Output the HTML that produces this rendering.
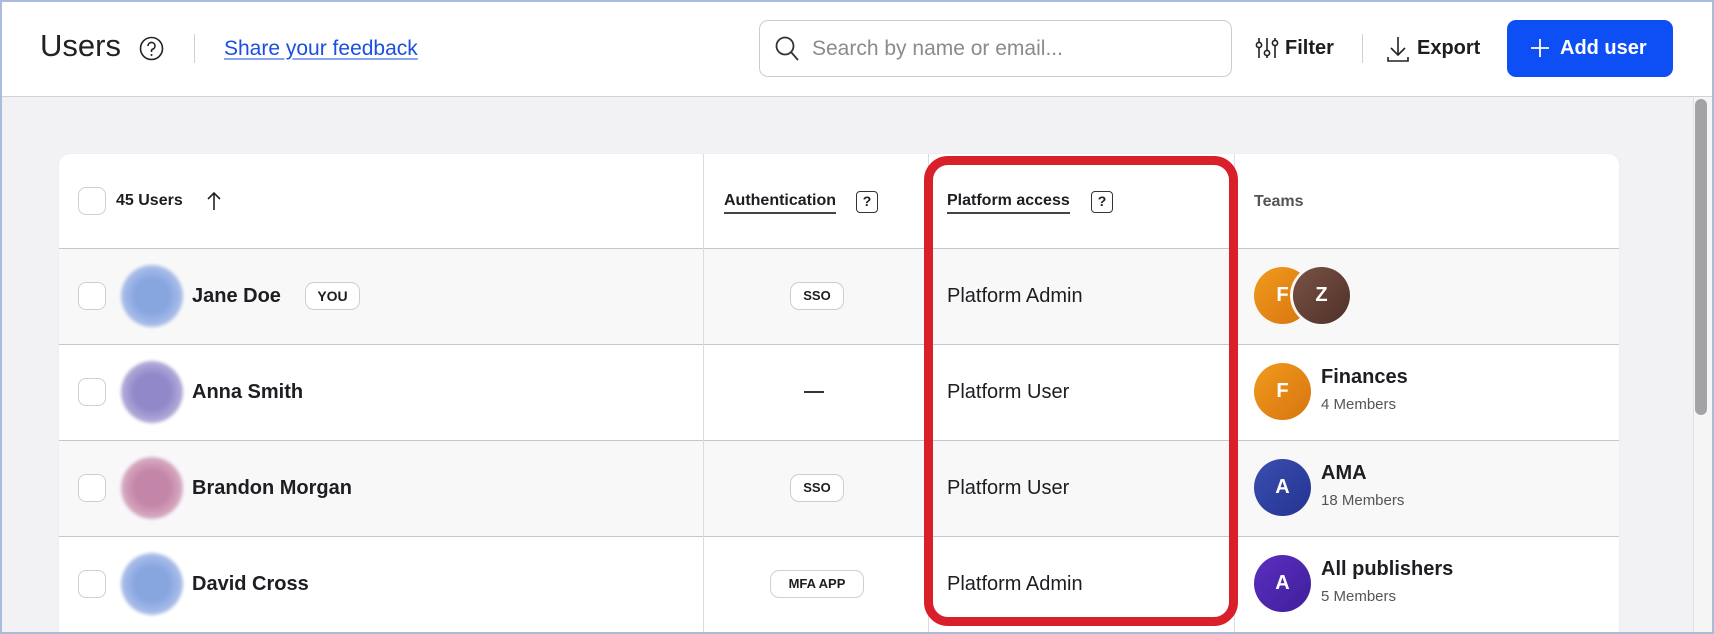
<!DOCTYPE html>
<html style="width:1714px;height:634px;overflow:hidden"><head><meta charset="utf-8"><style>
*{box-sizing:border-box;margin:0;padding:0}
body{width:1714px;height:634px;overflow:hidden;font-family:"Liberation Sans",sans-serif;color:#1d1d22;background:#f2f2f4;position:relative}
.frame{position:absolute;left:0;top:0;width:1714px;height:634px;border:2px solid #a9bcdc;pointer-events:none;z-index:50}
.hdr{position:absolute;left:0;top:0;width:1714px;height:97px;background:#fff;border-bottom:1px solid #d2d2d6}
.a{position:absolute}
.card{position:absolute;left:59px;top:154px;width:1560px;height:480px;background:#fff;border-radius:11px 11px 0 0;overflow:hidden;box-shadow:0 0 2px rgba(0,0,0,.05)}
.row{position:absolute;left:0;width:1560px;height:96px;border-top:1px solid #c6c6c9}
.vl{position:absolute;top:0;width:1px;height:480px;background:#dcdcdf}
.cb{position:absolute;left:19px;width:28px;height:28px;border:1px solid #cfcfd3;border-radius:8px;background:#fff}
.av{position:absolute;left:62px;width:62px;height:62px;border-radius:50%;filter:blur(1.5px)}
.nm{position:absolute;left:133px;font-size:20px;font-weight:bold}
.pa{position:absolute;left:888px;font-size:20px}
.badge{position:absolute;border:1px solid #cfcfd3;border-radius:9px;font-size:13px;font-weight:bold;height:28px;line-height:26px;text-align:center;background:#fff}
.tav{position:absolute;width:57px;height:57px;border-radius:50%;color:#fff;font-weight:bold;font-size:20px;text-align:center;line-height:57px}
.tn{position:absolute;left:1262px;font-size:20px;font-weight:bold}
.tm{position:absolute;left:1262px;font-size:15px;color:#555}
</style></head><body>
<div class="hdr">
 <div class="a" style="left:40px;top:28px;font-size:31px;color:#222">Users</div>
 <svg class="a" style="left:139px;top:36px" width="25" height="25" viewBox="0 0 25 25"><circle cx="12.5" cy="12.5" r="11" fill="none" stroke="#222" stroke-width="1.6"/><path d="M9 10a3.5 3.5 0 1 1 4.5 3.3c-.8.3-1 .8-1 1.7v1" fill="none" stroke="#222" stroke-width="1.6"/><circle cx="12.5" cy="19" r="1" fill="#222"/></svg>
 <div class="a" style="left:194px;top:34px;width:1px;height:29px;background:#d0d0d4"></div>
 <div class="a" style="left:224px;top:37px;font-size:21px;color:#1a4fe0;text-decoration:underline;text-decoration-color:#8aa6f0;text-underline-offset:3px">Share your feedback</div>
 <div class="a" style="left:759px;top:20px;width:473px;height:57px;border:1px solid #cdcdd1;border-radius:9px;background:#fff"></div>
 <svg class="a" style="left:774px;top:35px" width="26" height="28" viewBox="0 0 26 28"><circle cx="11" cy="11" r="8.5" fill="none" stroke="#333" stroke-width="1.8"/><path d="M17 17l7 8" stroke="#333" stroke-width="1.8"/></svg>
 <div class="a" style="left:812px;top:37px;font-size:21px;color:#8a8a90">Search by name or email...</div>
 <svg class="a" style="left:1255px;top:36px" width="24" height="26" viewBox="0 0 24 26" fill="none" stroke="#222" stroke-width="1.6"><path d="M4 2v20M12 2v20M20 2v20"/><circle cx="4" cy="9" r="2.6" fill="#fff"/><circle cx="12" cy="17" r="2.6" fill="#fff"/><circle cx="20" cy="7" r="2.6" fill="#fff"/></svg>
 <div class="a" style="left:1285px;top:37px;font-size:20px;font-weight:bold">Filter</div>
 <div class="a" style="left:1362px;top:34px;width:1px;height:29px;background:#d0d0d4"></div>
 <svg class="a" style="left:1386px;top:35px" width="24" height="28" viewBox="0 0 24 28" fill="none" stroke="#222" stroke-width="1.6"><path d="M12 2v18M5 13l7 7 7-7M2 22v4h20v-4"/></svg>
 <div class="a" style="left:1417px;top:37px;font-size:20px;font-weight:bold">Export</div>
 <div class="a" style="left:1507px;top:20px;width:166px;height:57px;background:#0d4ff5;border-radius:9px"></div>
 <svg class="a" style="left:1530px;top:38px" width="20" height="20" viewBox="0 0 20 20"><path d="M10 1v18M1 10h18" stroke="#fff" stroke-width="1.8"/></svg>
 <div class="a" style="left:1560px;top:37px;font-size:20px;font-weight:bold;color:#fff">Add user</div>
</div>
<div class="a" style="left:1693px;top:97px;width:21px;height:537px;background:#f5f5f5;border-left:1px solid #e0e0e0"></div>
<div class="a" style="left:1695px;top:99px;width:12px;height:316px;background:#a3a3a6;border-radius:6px"></div>

<div class="card">
 <div class="row" style="top:94px;background:#f8f8f8"></div>
 <div class="row" style="top:190px;background:#fff"></div>
 <div class="row" style="top:286px;background:#f8f8f8"></div>
 <div class="row" style="top:382px;background:#fff"></div>
 <div class="vl" style="left:644px"></div><div class="vl" style="left:869px"></div><div class="vl" style="left:1175px"></div>

 <div class="cb" style="top:33px"></div>
 <div class="a" style="left:57px;top:38px;font-size:16px;font-weight:bold">45 Users</div>
 <svg class="a" style="left:148px;top:37px" width="14" height="20" viewBox="0 0 14 20"><path d="M7 19V2M1 8l6-6 6 6" fill="none" stroke="#222" stroke-width="1.6"/></svg>
 <div class="a" style="left:665px;top:38px;font-size:16px;font-weight:bold;border-bottom:2px solid #444;padding-bottom:2px">Authentication</div>
 <div class="a" style="left:797px;top:37px;width:22px;height:22px;border:1.6px solid #333;border-radius:4px;font-size:14px;font-weight:bold;text-align:center;line-height:19px">?</div>
 <div class="a" style="left:888px;top:38px;font-size:16px;font-weight:bold;border-bottom:2px solid #444;padding-bottom:2px">Platform access</div>
 <div class="a" style="left:1032px;top:37px;width:22px;height:22px;border:1.6px solid #333;border-radius:4px;font-size:14px;font-weight:bold;text-align:center;line-height:19px">?</div>
 <div class="a" style="left:1195px;top:39px;font-size:16px;font-weight:bold;color:#555">Teams</div>

 <div class="cb" style="top:128px"></div>
 <div class="av" style="top:111px;background:radial-gradient(circle,#87a6e0 40%,#d0dcf4 100%)"></div>
 <div class="nm" style="top:131px">Jane Doe</div>
 <div class="badge" style="left:246px;top:128px;width:55px;font-size:14px">YOU</div>
 <div class="badge" style="left:731px;top:128px;width:54px">SSO</div>
 <div class="pa" style="top:131px">Platform Admin</div>
 <div class="tav" style="left:1195px;top:113px;background:linear-gradient(135deg,#f29a1c,#d67510)">F</div>
 <div class="tav" style="left:1234px;top:113px;background:linear-gradient(135deg,#7a5245,#4e3128);box-shadow:-1px 0 0 2px #f8f8f8">Z</div>

 <div class="cb" style="top:224px"></div>
 <div class="av" style="top:207px;background:radial-gradient(circle,#9088c8 40%,#d8d4ee 100%)"></div>
 <div class="nm" style="top:227px">Anna Smith</div>
 <div class="a" style="left:745px;top:237px;width:20px;height:2px;background:#333"></div>
 <div class="pa" style="top:227px">Platform User</div>
 <div class="tav" style="left:1195px;top:209px;background:linear-gradient(135deg,#f29a1c,#d67510)">F</div>
 <div class="tn" style="top:212px">Finances</div><div class="tm" style="top:242px">4 Members</div>

 <div class="cb" style="top:320px"></div>
 <div class="av" style="top:303px;background:radial-gradient(circle,#c486a8 40%,#ecd4e0 100%)"></div>
 <div class="nm" style="top:323px">Brandon Morgan</div>
 <div class="badge" style="left:731px;top:320px;width:54px">SSO</div>
 <div class="pa" style="top:323px">Platform User</div>
 <div class="tav" style="left:1195px;top:305px;background:linear-gradient(135deg,#3a4fb0,#243390)">A</div>
 <div class="tn" style="top:308px">AMA</div><div class="tm" style="top:338px">18 Members</div>

 <div class="cb" style="top:416px"></div>
 <div class="av" style="top:399px;background:radial-gradient(circle,#87a6e0 40%,#d0dcf4 100%)"></div>
 <div class="nm" style="top:419px">David Cross</div>
 <div class="badge" style="left:711px;top:416px;width:94px">MFA APP</div>
 <div class="pa" style="top:419px">Platform Admin</div>
 <div class="tav" style="left:1195px;top:401px;background:linear-gradient(135deg,#5b2ec0,#3f1f9a)">A</div>
 <div class="tn" style="top:404px">All publishers</div><div class="tm" style="top:434px">5 Members</div>
</div>
<div class="a" style="left:924px;top:156px;width:314px;height:470px;border:9px solid #d81f2a;border-radius:24px;z-index:10"></div>
<div class="frame"></div>
</body></html>
